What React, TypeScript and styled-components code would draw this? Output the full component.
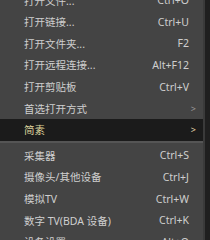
import styled, { createGlobalStyle } from "styled-components";

const GlobalStyle = createGlobalStyle`
  html, body {
    margin: 0;
    padding: 0;
    background: #1f1f1f;
    overflow: hidden;
  }
`;

type Entry =
  | { kind: "item"; label: string; shortcut?: string; submenu?: boolean; active?: boolean }
  | { kind: "sep" };

const entries: Entry[] = [
  { kind: "item", label: "打开文件...", shortcut: "Ctrl+O" },
  { kind: "item", label: "打开链接...", shortcut: "Ctrl+U" },
  { kind: "item", label: "打开文件夹...", shortcut: "F2" },
  { kind: "item", label: "打开远程连接...", shortcut: "Alt+F12" },
  { kind: "item", label: "打开剪贴板", shortcut: "Ctrl+V" },
  { kind: "item", label: "首选打开方式", submenu: true },
  { kind: "item", label: "简素", submenu: true, active: true },
  { kind: "sep" },
  { kind: "item", label: "采集器", shortcut: "Ctrl+S" },
  { kind: "item", label: "摄像头/其他设备", shortcut: "Ctrl+J" },
  { kind: "item", label: "模拟TV", shortcut: "Ctrl+W" },
  { kind: "item", label: "数字 TV(BDA 设备)", shortcut: "Ctrl+K" },
  { kind: "item", label: "设备设置", shortcut: "Alt+O" },
];

const App = () => {
  return (
    <>
      <GlobalStyle />
      <Menu>
        {entries.map((e, i) =>
          e.kind === "sep" ? (
            <Separator key={i} />
          ) : (
            <Item key={i} $active={e.active}>
              <Label>{e.label}</Label>
              <Shortcut>{e.shortcut}</Shortcut>
              <Arrow $active={e.active}>{e.submenu ? ">" : ""}</Arrow>
            </Item>
          )
        )}
      </Menu>
    </>
  );
};

const Menu = styled.div`
  width: 203px;
  margin-top: -10.6px;
  background: #444444;
  border-right: 2px solid #3a3a3a;
  font-family: "Noto Sans", "Noto Sans CJK SC", sans-serif;
  font-size: 10.5px;
  color: #cfcfcf;
`;

const Item = styled.div<{ $active?: boolean }>`
  display: flex;
  align-items: center;
  height: 21.6px;
  padding: 0 7px 0 24px;
  background: ${(p) => (p.$active ? "#1b1b1b" : "transparent")};
  color: ${(p) => (p.$active ? "#ddd39c" : "#cfcfcf")};
`;

const Label = styled.span`
  flex: 1;
  white-space: nowrap;
`;

const Shortcut = styled.span`
  white-space: nowrap;
`;

const Arrow = styled.span<{ $active?: boolean }>`
  width: 7px;
  font-size: 9px;
  text-align: right;
  color: ${(p) => (p.$active ? "#e6dcb0" : "#9a9a9a")};
`;

const Separator = styled.div`
  height: 4px;
  border-top: 2px solid #555555;
  box-sizing: border-box;
`;

export default App;
